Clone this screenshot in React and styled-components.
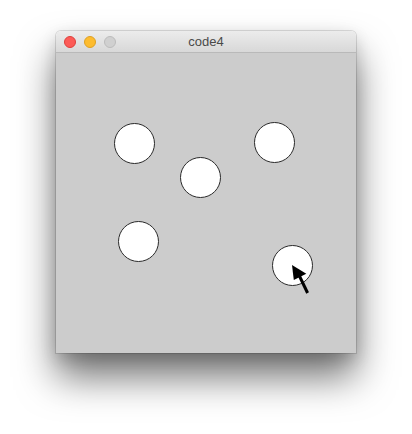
import styled, { createGlobalStyle } from "styled-components";

const Global = createGlobalStyle`
    html, body {
        margin: 0;
        padding: 0;
        background: #ffffff;
        font-family: "Liberation Sans", Arial, sans-serif;
    }
`;

const Page = styled.div`
    width: 412px;
    height: 434px;
    padding: 31px 0 0 56px;
    box-sizing: border-box;
    overflow: hidden;
`;

const Window = styled.div`
    width: 300px;
    display: flex;
    flex-direction: column;
    border-radius: 5px 5px 0 0;
    box-shadow: 0 0 0 1px rgba(0, 0, 0, 0.12), 0 24px 38px rgba(0, 0, 0, 0.55), 0 6px 16px rgba(0, 0, 0, 0.15);
`;

const TitleBar = styled.div`
    height: 22px;
    display: flex;
    align-items: center;
    position: relative;
    background: linear-gradient(#ececec, #d8d8d8);
    border-bottom: 1px solid #b9b9b9;
    border-radius: 5px 5px 0 0;
    box-sizing: border-box;
    padding-left: 8px;
    gap: 8px;
`;

const Light = styled.span`
    width: 12px;
    height: 12px;
    border-radius: 50%;
    box-sizing: border-box;
    background: ${ p => p.color };
    border: 0.5px solid ${ p => p.edge };
`;

const Title = styled.span`
    position: absolute;
    left: 0;
    right: 0;
    text-align: center;
    font-size: 13px;
    color: #4a4a4a;
    line-height: 22px;
    pointer-events: none;
`;

const Canvas = styled.div`
    width: 300px;
    height: 300px;
    background: #cccccc;
    position: relative;
`;

const Circle = styled.div`
    position: absolute;
    width: 41px;
    height: 41px;
    box-sizing: border-box;
    border-radius: 50%;
    background: #ffffff;
    border: 1px solid #2a2a2a;
`;

const Cursor = styled.svg`
    position: absolute;
    left: 234px;
    top: 210px;
`;

const circles = [
    [78.5, 90],
    [144.5, 124],
    [218.5, 89],
    [82.5, 188.5],
    [236.5, 212.5]
];

export default function App() {
    return (
        <Page>
            <Global />
            <Window>
                <TitleBar>
                    <Light color="#fc5b57" edge="#de3f3b" />
                    <Light color="#fdbc2f" edge="#dea123" />
                    <Light color="#d0d0d0" edge="#bcbcbc" />
                    <Title>code4</Title>
                </TitleBar>
                <Canvas>
                    { circles.map(([x, y], i) => (
                        <Circle key={ i } style={{ left: x - 20.5, top: y - 20.5 }} />
                    )) }
                    <Cursor width="22" height="32" viewBox="0 0 22 32">
                        <polygon points="2,2 3.8,17 16.3,10.8" fill="#000" />
                        <line x1="8" y1="10" x2="17.6" y2="30" stroke="#000" strokeWidth="3" />
                    </Cursor>
                </Canvas>
            </Window>
        </Page>
    );
}
